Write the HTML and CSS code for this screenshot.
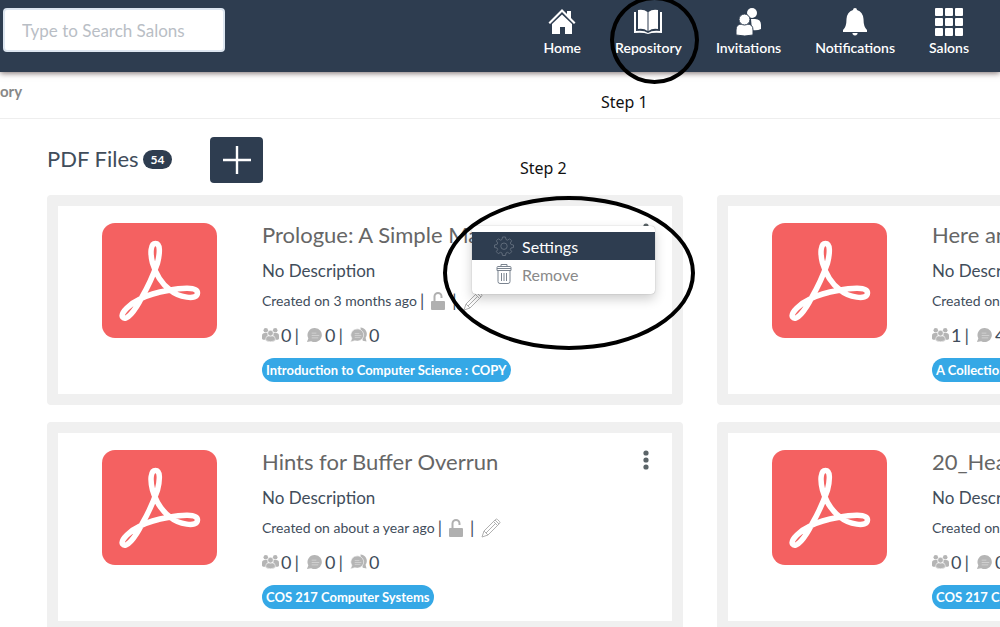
FILE: index.html
```html
<!DOCTYPE html>
<html lang="en">
<head>
  <meta charset="UTF-8" />
  <meta name="viewport" content="width=device-width, initial-scale=1.0"/>
  <title>Repository</title>
  <link rel="stylesheet" href="styles.css">
</head>
<body>

  <!-- shared icons -->
  <svg class="sprite" aria-hidden="true">
    <symbol id="pdf" viewBox="0 0 115 115">
      <rect width="115" height="115" rx="13" fill="#f46161"/>
      <path d="M40 74C47 62 52 50 55.500 40C58 30 58.500 20.500 53.500 20.500C48.500 20.500 48 30 50.500 40C54 52 60 61 68 67C76 74 95.500 78 95.500 70C95.500 63 78 65 66 67.500C54 69.500 44 73 38 76C29 80 18 90 20.500 94C24 99 33 88 40 74Z" fill="none" stroke="#fff" stroke-width="5.500"/>
    </symbol>
    <symbol id="group" viewBox="0 0 18 16">
      <g fill="#b5b5b5">
        <circle cx="4" cy="3" r="2.400"/><circle cx="14" cy="3" r="2.400"/>
        <path d="M0 12V9q0-3 3-3h3v4l-2 3H1zM18 12V9q0-3-3-3h-3v4l2 3h3z"/>
        <g stroke="#fff" stroke-width=".6"><path d="M4 14v-2q0-3 3-3h4q3 0 3 3v2q-5 2.500-10 0z"/><circle cx="9" cy="6" r="3"/></g>
      </g>
    </symbol>
    <symbol id="comment" viewBox="0 0 18 16">
      <path d="M9.500.5a7.500 7.500 0 1 1-4 14L1 15.500l1.500-4A7.500 7.500 0 0 1 9.500.5z" fill="#b5b5b5"/>
      <path d="M6 6h5M6 8.500h8M6 11h7" stroke="#d8d8d8" stroke-width=".8" fill="none"/>
    </symbol>
    <symbol id="comments" viewBox="0 0 18 16">
      <path d="M11 0a7 7 0 0 1 5.500 11l1 4-4-1z" fill="#b5b5b5"/>
      <path d="M8.500 1.500a7 6.500 0 1 1-3.500 12.500L.5 15.500l1.500-4a7 6.500 0 0 1 6.500-10z" fill="#b5b5b5" stroke="#fff" stroke-width=".6"/>
      <path d="M5 6.500h5M5 8.500h7M5 10.500h6" stroke="#d8d8d8" stroke-width=".8" fill="none"/>
    </symbol>
    <symbol id="lock" viewBox="0 0 14 18">
      <rect y="9" width="14" height="9" rx="1" fill="#b0b0b0"/>
      <path d="M3.500 9V4.500a3.500 3.500 0 0 1 7 0V6" fill="none" stroke="#b0b0b0" stroke-width="2"/>
    </symbol>
    <symbol id="pencil" viewBox="0 0 20 20">
      <path d="M1 19l2-6L14.500 1.500q1-1 2 0l2 2q1 1 0 2L7 17zM3 13l4 4M12.500 3.500l4 4M14 2l4 4M5 15L14 6" fill="#fff" stroke="#b0b0b0"/>
    </symbol>
    <symbol id="dots" viewBox="0 0 6 20">
      <g fill="#5b6468"><circle cx="3" cy="3" r="2.600"/><circle cx="3" cy="10" r="2.600"/><circle cx="3" cy="17" r="2.600"/></g>
    </symbol>
  </svg>

  <header class="topbar">
    <input class="search" type="text" placeholder="Type to Search Salons" aria-label="Search Salons">
    <nav class="nav">
      <a href="#">
        <svg width="28" height="28" viewBox="0 0 28 28" fill="#fff"><path d="M14 1l5 5V3h4v7l4.500 4.500-1.500 1.500L14 4 2 16 .5 14.500z"/><path d="M14 6.500l10 9.500v10h-7v-7h-5v7H4V16z"/></svg>
        Home
      </a>
      <a href="#" class="current">
        <svg width="30" height="28" viewBox="0 0 30 28" fill="#fff"><path d="M5 2q6-1 9.500 2v19Q11 20 5 21zM25 2q-6-1-9.500 2v19q3.500-3 9.500-2z"/><path d="M1 4h2v19q8-1 12 2 4-3 12-2V4h2v21q-9-1-14 1-5-2-14-1z"/></svg>
        Repository
        <span class="mark mark-circle"></span>
      </a>
      <a href="#">
        <svg width="28" height="28" viewBox="0 0 28 28" fill="#fff"><circle cx="17" cy="5" r="5"/><path d="M16 11h4q6 0 6 6v4q-4 2-9 1z"/><g stroke="#2e3d50"><path d="M1 27v-5q0-6 6-6h5q6 0 6 6v5q-8 2-17 0z"/><circle cx="9.500" cy="11.500" r="5.500"/></g></svg>
        Invitations
      </a>
      <a href="#">
        <svg width="28" height="28" viewBox="0 0 28 28" fill="#fff"><path d="M14 0q2 0 2 2 6 2 6.500 9 0 8 3.500 11v2H2v-2q3.500-3 3.500-11Q6 4 12 2q0-2 2-2z"/><path d="M11.500 25h5v1q-2.500 3-5 0z"/></svg>
        Notifications
      </a>
      <a href="#">
        <svg width="28" height="28" viewBox="0 0 28 28" fill="#fff"><rect width="8" height="8" rx="1"/><rect x="10" width="8" height="8" rx="1"/><rect x="20" width="8" height="8" rx="1"/><rect y="10" width="8" height="8" rx="1"/><rect x="10" y="10" width="8" height="8" rx="1"/><rect x="20" y="10" width="8" height="8" rx="1"/><rect y="20" width="8" height="8" rx="1"/><rect x="10" y="20" width="8" height="8" rx="1"/><rect x="20" y="20" width="8" height="8" rx="1"/></svg>
        Salons
      </a>
    </nav>
  </header>

  <div class="breadcrumb">
    <span>ory</span>
    <span class="step step-one">Step 1</span>
  </div>

  <main>
    <div class="heading">
      <div class="title">
        <h1>PDF Files</h1>
        <span class="badge">54</span>
      </div>
      <button class="add" aria-label="Add file">
        <svg width="28" height="28" viewBox="0 0 28 28"><path d="M14 0v28M0 14h28" stroke="#fff" stroke-width="2.400"/></svg>
      </button>
      <span class="step step-two">Step 2</span>
    </div>

    <div class="files">
      <article class="card">
        <svg class="thumb"><use href="#pdf"/></svg>
        <div class="info">
          <h2>Prologue: A Simple Ma</h2>
          <p class="desc">No Description</p>
          <p class="created">Created on 3 months ago<i>|</i><svg class="lock"><use href="#lock"/></svg><i>|</i><svg class="pencil"><use href="#pencil"/></svg></p>
          <p class="counts"><svg><use href="#group"/></svg>0<i>|</i><svg><use href="#comment"/></svg>0<i>|</i><svg><use href="#comments"/></svg>0</p>
          <a href="#" class="tag">Introduction to Computer Science : COPY</a>
        </div>
        <button class="more" aria-label="More"><svg><use href="#dots"/></svg></button>
        <div class="menu">
          <button class="active">
            <svg width="20" height="20" viewBox="0 0 20 20" fill="none" stroke="#5f6b7a"><path d="M8.500 1h3l.5 2.500 1.500.7 2.200-1.400 2 2-1.400 2.200.7 1.500 2.500.5v2.500l-2.500.5-.7 1.500 1.400 2.200-2 2-2.200-1.400-1.500.7-.5 2.500h-3L8 17l-1.500-.7-2.200 1.400-2-2 1.400-2.200-.7-1.500L.5 11.500V9L3 8.500 3.700 7 2.300 4.800l2-2 2.200 1.400L8 3.500z"/><circle cx="10" cy="10.200" r="3.200"/></svg>
            Settings
          </button>
          <button>
            <svg width="20" height="20" viewBox="0 0 20 20" fill="none" stroke="#7b8490"><path d="M3 4.500h14M3 3.500q0-1 1-1h12q1 0 1 1v3H3zM7 2.500v-2h6v2M4 6.500v11q0 2 2 2h8q2 0 2-2v-11M7.500 9v8M10 9v8M12.500 9v8"/></svg>
            Remove
          </button>
        </div>
        <span class="mark mark-menu"></span>
      </article>

      <article class="card">
        <svg class="thumb"><use href="#pdf"/></svg>
        <div class="info">
          <h2>Here an</h2>
          <p class="desc">No Description</p>
          <p class="created">Created on</p>
          <p class="counts"><svg><use href="#group"/></svg>1<i>|</i><svg><use href="#comment"/></svg>4</p>
          <a href="#" class="tag">A Collection</a>
        </div>
      </article>

      <article class="card">
        <svg class="thumb"><use href="#pdf"/></svg>
        <div class="info">
          <h2>Hints for Buffer Overrun</h2>
          <p class="desc">No Description</p>
          <p class="created">Created on about a year ago<i>|</i><svg class="lock"><use href="#lock"/></svg><i>|</i><svg class="pencil"><use href="#pencil"/></svg></p>
          <p class="counts"><svg><use href="#group"/></svg>0<i>|</i><svg><use href="#comment"/></svg>0<i>|</i><svg><use href="#comments"/></svg>0</p>
          <a href="#" class="tag">COS 217 Computer Systems</a>
        </div>
        <button class="more" aria-label="More"><svg><use href="#dots"/></svg></button>
      </article>

      <article class="card">
        <svg class="thumb"><use href="#pdf"/></svg>
        <div class="info">
          <h2>20_Hea</h2>
          <p class="desc">No Description</p>
          <p class="created">Created on</p>
          <p class="counts"><svg><use href="#group"/></svg>0<i>|</i><svg><use href="#comment"/></svg>0</p>
          <a href="#" class="tag">COS 217 Computer Systems</a>
        </div>
      </article>
    </div>
  </main>

</body>
</html>
```
FILE: styles.css
```css
* { box-sizing: border-box; }
html { overflow: hidden; }
body {
  margin: 0;
  font-family: Lato, sans-serif;
  background: #fff;
  color: #414d5b;
}
h1, h2, p { margin: 0; font-weight: 400; }
a { text-decoration: none; }
i { font-style: normal; }
button { font-family: inherit; border: none; cursor: pointer; }
.sprite { position: absolute; width: 0; height: 0; }

.topbar {
  position: relative;
  z-index: 1;
  display: flex;
  justify-content: space-between;
  align-items: flex-start;
  height: 72px;
  padding: 8px 31px 0 3px;
  background: #2e3d50;
  box-shadow: 0 1px 6px rgba(60,40,40,0.7);
}
.search {
  width: 222px;
  height: 44px;
  padding: 0 17px;
  border: 2px solid #dde6f0;
  border-radius: 4px;
  font-family: inherit;
  font-size: 17px;
}
.search::placeholder { color: #b9bec5; }
.nav { display: flex; gap: 34px; }
.nav a {
  position: relative;
  display: flex;
  flex-direction: column;
  align-items: center;
  gap: 3px;
  color: #fff;
  font-size: 14px;
  line-height: 18px;
  font-weight: 600;
}

.breadcrumb {
  position: relative;
  height: 47px;
  padding-top: 9px;
  border-bottom: 1px solid #eee;
  color: #888;
  font-size: 15px;
  line-height: 20px;
  font-weight: 700;
}

/* hand-drawn notes on top of the page */
.step {
  position: absolute;
  font-family: "Noto Sans", sans-serif;
  font-size: 16px;
  line-height: 20px;
  font-weight: 400;
  color: #111;
}
.step-one { left: 601px; top: 20px; }
.step-two { left: 473px; top: 21px; }
.mark {
  position: absolute;
  border: 4px solid #000;
  border-radius: 50%;
  pointer-events: none;
}
.mark-circle { left: -5px; top: -12px; width: 89px; height: 88px; }
.mark-menu { right: -23px; top: -10px; width: 252px; height: 154px; }

main { padding: 18px 0 0 47px; }
.heading {
  position: relative;
  display: flex;
  height: 46px;
  margin-bottom: 12px;
}
.title {
  display: flex;
  align-items: center;
  width: 163px;
  height: 44px;
}
.title h1 { font-size: 22px; line-height: 28px; }
.badge {
  margin-left: 4px;
  padding: 0 8px;
  border-radius: 10px;
  background: #2e3d50;
  color: #fff;
  font-size: 12px;
  line-height: 19px;
  font-weight: 700;
}
.add {
  display: flex;
  justify-content: center;
  align-items: center;
  width: 53px;
  height: 46px;
  border-radius: 4px;
  background: #2e3d50;
}

.files {
  display: grid;
  grid-template-columns: repeat(2, minmax(636px, 1fr));
  gap: 17px 34px;
}
.card {
  position: relative;
  display: flex;
  align-items: flex-start;
  padding: 17px 23px 12px 44px;
  border: 11px solid #f0f0f0;
  border-radius: 4px;
}
.thumb { width: 115px; height: 115px; margin-right: 45px; flex: none; }
.info {
  display: flex;
  flex-direction: column;
  align-items: flex-start;
  gap: 8px;
  margin-top: -5px;
}
.info h2 { color: #666; font-size: 22px; line-height: 34px; }
.desc { font-size: 17px; line-height: 22px; }
.created { display: flex; align-items: center; font-size: 14px; line-height: 22px; }
.created i { margin: 0 3px; font-size: 17px; }
.lock { width: 14px; height: 18px; margin: 0 4px; }
.pencil { width: 20px; height: 20px; margin-left: 4px; }
.counts { display: flex; align-items: center; font-size: 18px; line-height: 30px; }
.counts svg { width: 17px; height: 16px; margin-right: 2px; }
.counts i { margin: 0 7px 0 3px; }
.tag {
  padding: 0 4px;
  border-radius: 12px;
  background: #35a8e6;
  color: #fff;
  font-size: 13px;
  line-height: 24px;
  font-weight: 700;
}
.more { margin-left: auto; padding: 0; background: none; }
.more svg { display: block; width: 6px; height: 20px; }

.menu {
  position: absolute;
  top: 20px;
  right: 17px;
  width: 183px;
  padding: 6px 0;
  border-radius: 4px;
  background: #fff;
  box-shadow: 0 0 1px rgba(0,0,0,0.4), 0 5px 12px rgba(0,0,0,0.2);
}
.menu button {
  display: flex;
  align-items: center;
  gap: 8px;
  width: 100%;
  height: 28px;
  padding: 0 22px;
  background: none;
  color: #8a8a8a;
  font-size: 16px;
}
.menu .active { background: #2e3d50; color: #fff; }
```
